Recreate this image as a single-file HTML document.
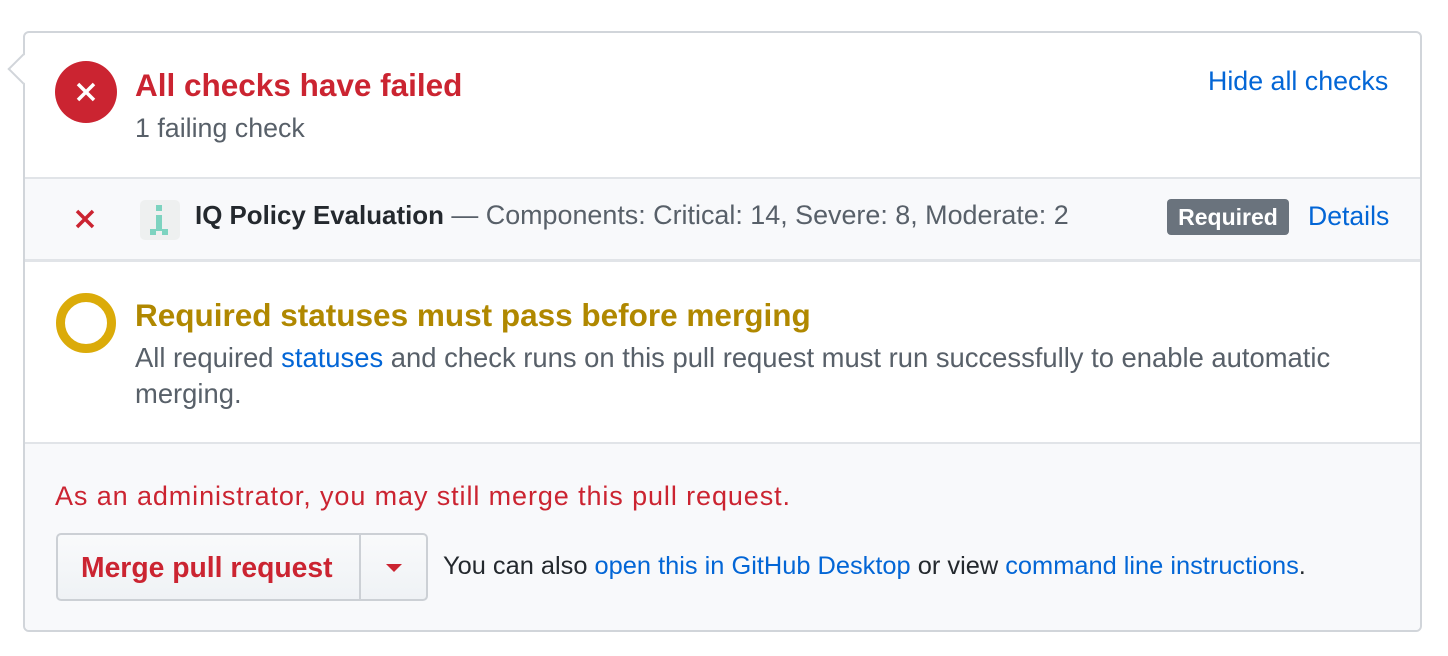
<!DOCTYPE html>
<html><head><style>
*{box-sizing:border-box;margin:0;padding:0}
body{width:1448px;height:656px;background:#fff;font-family:"Liberation Sans",sans-serif;position:relative;overflow:hidden}
.box{position:absolute;left:23px;top:31px;width:1399px;height:601px;border:2px solid #d1d5da;border-radius:6px;overflow:hidden;background:#fff}
.arrow{position:absolute;left:12px;top:58px;width:22px;height:22px;background:#fff;border-left:2px solid #d1d5da;border-bottom:2px solid #d1d5da;transform:rotate(45deg);z-index:2}
.abs{position:absolute;white-space:nowrap}
a{color:#0366d6;text-decoration:none}
</style></head><body>
<div class="arrow"></div>
<div class="box">
 <div class="abs" style="left:30px;top:28px;width:62px;height:62px;border-radius:50%;background:#cb2431"></div>
 <svg class="abs" style="left:51px;top:49px" width="20" height="20" viewBox="0 0 20 20"><path d="M2 2L18 18M18 2L2 18" stroke="#fff" stroke-width="3.5"/></svg>
 <div class="abs" style="left:110px;top:34px;font-size:31.5px;font-weight:bold;color:#cb2431">All checks have failed</div>
 <div class="abs" style="left:110px;top:80px;font-size:26.8px;color:#586069">1 failing check</div>
 <div class="abs" style="left:1183px;top:33px;font-size:26.8px;color:#0366d6">Hide all checks</div>

 <div class="abs" style="left:0;top:144px;width:1399px;height:85px;background:#f8f9fb;border-top:2px solid #e1e4e8;border-bottom:3px solid #e1e4e8"></div>
 <svg class="abs" style="left:50px;top:176px" width="20" height="20" viewBox="0 0 20 20"><path d="M2 2L18 18M18 2L2 18" stroke="#cb2431" stroke-width="3.5"/></svg>
 <div class="abs" style="left:115px;top:167px;width:40px;height:40px;border-radius:5px;background:#eef0f0"></div>
 <div class="abs" style="left:131px;top:172px;width:6px;height:6px;background:#7dd3c0"></div>
 <div class="abs" style="left:131px;top:182px;width:6px;height:16px;background:#7dd3c0"></div>
 <div class="abs" style="left:125px;top:196px;width:6px;height:6px;background:#7dd3c0"></div>
 <div class="abs" style="left:137px;top:196px;width:6px;height:6px;background:#7dd3c0"></div>
 <div class="abs" style="left:170px;top:167px;font-size:26.9px;color:#24292e"><b style="font-size:25.9px">IQ Policy Evaluation</b> <span style="color:#586069">— Components: Critical: 14, Severe: 8, Moderate: 2</span></div>
 <div class="abs" style="left:1142px;top:166px;width:122px;height:36px;border-radius:4px;background:#6a737d;color:#fff;font-weight:bold;font-size:23px;text-align:center;line-height:36px">Required</div>
 <div class="abs" style="left:1283px;top:168px;font-size:26.6px;color:#0366d6">Details</div>

 <div class="abs" style="left:31px;top:260px;width:60px;height:60px;border-radius:50%;border:9px solid #dbab09"></div>
 <div class="abs" style="left:110px;top:264px;font-size:31.5px;font-weight:bold;color:#b08800">Required statuses must pass before merging</div>
 <div class="abs" style="left:110px;top:307px;font-size:27.4px;color:#586069;line-height:36px;white-space:normal;width:1240px">All required <a>statuses</a> and check runs on this pull request must run successfully to enable automatic merging.</div>

 <div class="abs" style="left:0;top:409px;width:1399px;height:200px;background:#f8f9fb;border-top:2px solid #e1e4e8"></div>
 <div class="abs" style="left:30px;top:448px;font-size:27px;letter-spacing:0.9px;color:#cb2431">As an administrator, you may still merge this pull request.</div>
 <div class="abs" style="left:31px;top:500px;width:372px;height:68px;border:2px solid #ccd0d5;border-radius:5px;background:linear-gradient(#f9fafb,#eff2f5)"></div>
 <div class="abs" style="left:334px;top:502px;width:2px;height:64px;background:#ccd0d5"></div>
 <div class="abs" style="left:56px;top:518px;font-size:28.3px;font-weight:bold;color:#cb2431">Merge pull request</div>
 <svg class="abs" style="left:361px;top:531px" width="16" height="9"><path d="M0 0H16L8 8Z" fill="#cb2431"/></svg>
 <div class="abs" style="left:418px;top:519px;font-size:25.4px;color:#24292e">You can also <a>open this in GitHub Desktop</a> or view <a>command line instructions</a>.</div>
</div>
</body></html>
